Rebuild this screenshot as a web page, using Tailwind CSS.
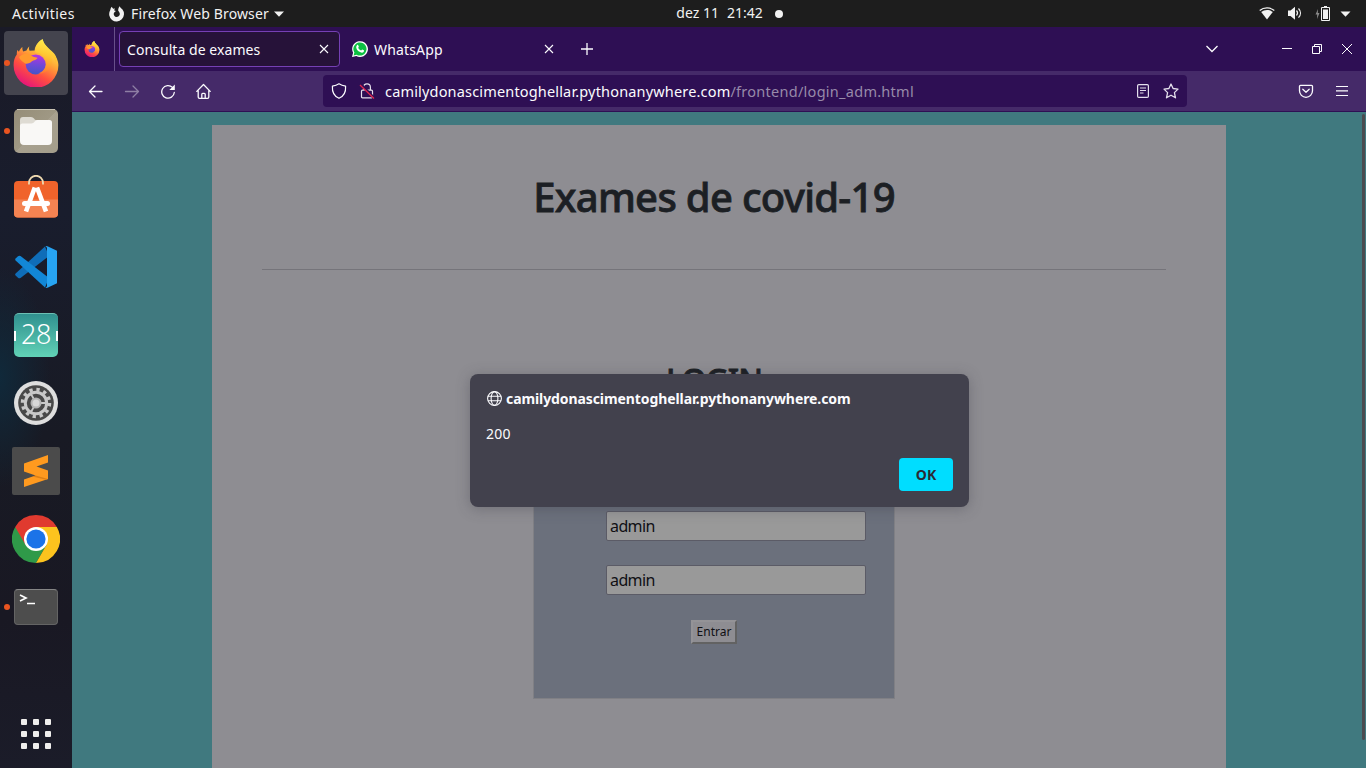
<!DOCTYPE html>
<html lang="pt-BR">
<head>
<meta charset="utf-8">
<title>Consulta de exames</title>
<script src="https://cdn.jsdelivr.net/npm/@tailwindcss/browser@4"></script>
</head>
<body class="w-[1366px] h-[768px] overflow-hidden flex flex-col bg-[#1a1a24] text-white font-['Noto_Sans',sans-serif]">

<!-- Desktop top bar -->
<header class="h-[27px] shrink-0 bg-[#1d1d1d] text-[#f2f2f2] text-[14px] leading-[27px] grid grid-cols-3 whitespace-nowrap">
  <div class="flex items-center pl-3">
    <span class="w-[62px] tracking-[0.45px]">Activities</span>
    <svg class="ml-[35px] w-4 h-4" viewBox="0 0 16 16"><path fill="#f2f2f2" d="M2.600.7 4.200 2.700l1.900-.2L5 4.300 6.900 5 5.200 6.400a3 3 0 1 0 5.200.1c-.2-.8-.7-1.300-1.100-1.500C9 3.300 9.600 1.500 10.800.2c.3 1.500 1.600 2 2.700 3.400a7.400 7.400 0 1 1-12.300.7c.1-1.200.6-2.500 1.400-3.600z"/></svg>
    <span class="ml-[6px] w-[138px] tracking-[0.13px]">Firefox Web Browser</span>
    <svg class="ml-[5px] w-[10px] h-[6px]" viewBox="0 0 10 6"><path fill="#f2f2f2" d="M0 .5h10L5 5.700z"/></svg>
  </div>
  <div class="flex items-center pl-[221px]">
    <span class="relative -top-px">dez 11</span><span class="relative -top-px ml-2">21:42</span>
    <span class="ml-3 w-2 h-2 rounded-full bg-[#f2f2f2]"></span>
  </div>
  <div class="flex items-center justify-end pr-[15px]">
    <svg class="w-4 h-4" viewBox="0 0 16 16"><path fill="none" stroke="#f2f2f2" stroke-width="1.300" d="M.7 4.500C4.800 1.100 11.200 1.100 15.300 4.500"/><path fill="#f2f2f2" d="M2.200 6c3.300-2.700 8.300-2.700 11.600 0L8 13.500z"/></svg>
    <svg class="ml-3 w-4 h-4" viewBox="0 0 16 16"><path fill="#f2f2f2" d="M1 4.500h2.500L8 .7v13L3.500 10H1z"/><path fill="none" stroke="#f2f2f2" stroke-width="1.200" d="M9.500 4.500c1.300 1.500 1.300 3.500 0 5M11.500 2.500c2.600 2.700 2.600 6.500 0 9.200"/></svg>
    <svg class="ml-3 w-4 h-4" viewBox="0 0 16 16"><path fill="#8a8a8a" d="M3 3 .5 8.500h1.700L2 13 4.500 7H2.800z"/><path fill="none" stroke="#f2f2f2" d="M6.500 1.500h8v13h-8z"/><path fill="#f2f2f2" d="M9 0h3v1.500H9zM8 3.500h5V13H8z"/></svg>
    <svg class="ml-[9px] w-[11px] h-[6px]" viewBox="0 0 11 6"><path fill="#f2f2f2" d="M.5.5h10l-5 5.200z"/></svg>
  </div>
</header>

<div class="flex flex-1 min-h-0">
  <!-- Dock -->
  <nav class="w-[72px] shrink-0 flex flex-col items-center pt-[2px] bg-[radial-gradient(ellipse_50px_110px_at_0px_350px,#10293a,transparent),linear-gradient(#1a1a27,#191d2d_25%,#181a24_55%,#191823_80%,#1b1c29)]">
    <div class="relative w-16 h-[68px] pt-[2px]">
      <div class="w-16 h-16 rounded-[4px] bg-[#44444e] flex items-center justify-center">
        <svg class="w-12 h-12" viewBox="0 0 48 48">
          <defs>
            <linearGradient id="ffa" x1=".8" y1=".1" x2=".3" y2="1"><stop offset="0" stop-color="#fff44f"/><stop offset=".35" stop-color="#ffa436"/><stop offset=".65" stop-color="#ff4f40"/><stop offset="1" stop-color="#e4127d"/></linearGradient>
            <linearGradient id="ffb" x1=".5" y1="0" x2=".4" y2="1"><stop offset="0" stop-color="#b833e1"/><stop offset=".5" stop-color="#7048d8"/><stop offset="1" stop-color="#4255c6"/></linearGradient>
            <linearGradient id="ffc" x1=".7" y1="0" x2=".5" y2="1"><stop offset="0" stop-color="#fff24f"/><stop offset=".5" stop-color="#ffc532"/><stop offset="1" stop-color="#ff7a30"/></linearGradient>
          </defs>
          <g id="fox">
            <path fill="url(#ffa)" d="M10.500 8c-.5 2 .2 3.500.7 4.400l3.300-.9c1-2 2-3.400 2.800-4-.6 2-.2 3.300.3 4.300l5-.4C23 6.500 27 1.500 30.800.3c.4 5 5 8 7.600 11.500 4.500 4.500 8 8 8 14.500a22.400 22.400 0 0 1-44.800 0c0-4.500 1-8 3.200-10.800 0-2 .2-3.500.6-4.500l1.500 1.800C7.800 10.500 9 9 10.500 8z"/>
            <circle cx="23.700" cy="25.500" r="10" fill="url(#ffb)"/>
            <path fill="#ff9a2e" d="M7 18c4-3.500 7.500-3.700 11-2.600 2 1.800 4.200 2.800 7.500 3.300-.5 2-4 2.500-5.600 3.600-1 1.500-3.500 2.500-5.700 2.500C12 24 8 21 7 18z"/>
            <path fill="url(#ffc)" d="M30.800.3C25 4 22.500 9 23.500 13.200c6 .8 9.500 4.500 10.500 9.300.8 6-2.500 10-8 12 10 .5 16.500-8 13-18 4 3 5 8 5 8 2.300-7-2.500-11-5.600-13.500C35 7.500 31.500 5 30.800.3z"/>
          </g>
        </svg>
      </div>
      <span class="absolute left-0 top-[31px] w-[6px] h-[6px] rounded-full bg-[#e95420]"></span>
    </div>
    <div class="relative w-16 h-[68px] flex items-center justify-center">
      <svg class="w-12 h-12" viewBox="0 0 48 48"><defs><linearGradient id="fl" x1="0" y1="0" x2="1" y2="1"><stop offset="0" stop-color="#958d78"/><stop offset=".5" stop-color="#9f9884"/><stop offset=".5" stop-color="#a8a18f"/><stop offset="1" stop-color="#a39d8b"/></linearGradient></defs><rect x="2" y="2" width="44" height="44" rx="5" fill="url(#fl)"/><path d="M5 2.500h38" stroke="#c9c3b3"/><path fill="#dedbd3" d="M8 13q0-3 3-3h8q2 0 3 1.500t2 1.500h12v8H8z"/><path fill="#f9f8f6" d="M8 19q0-2.500 2.500-2.500h9q2 0 3-1.700t3-1.700h12q2.500 0 2.500 2.500V34q0 4-4 4H12q-4 0-4-4z"/></svg>
      <span class="absolute left-0 top-[31px] w-[6px] h-[6px] rounded-full bg-[#e95420]"></span>
    </div>
    <div class="w-16 h-[68px] flex items-center justify-center">
      <svg class="w-12 h-12" viewBox="0 0 48 48"><rect x="2" y="6" width="44" height="36.500" rx="4" fill="#f0632b"/><path fill="#f48352" d="M2 24.500h44v14q0 4-4 4H6q-4 0-4-4z"/><path d="M17 9.500V7.800a7 7 0 0 1 14 0v1.700" fill="none" stroke="#efd9b0" stroke-width="1.800"/><path d="M22.800 12.500 14 36.500M25 12.500 34 36.500" fill="none" stroke="#fff" stroke-width="4.600"/><rect x="10" y="26" width="28" height="5" rx="2.500" fill="#fff"/></svg>
    </div>
    <div class="w-16 h-[68px] flex items-center justify-center">
      <svg class="w-12 h-12" viewBox="0 0 48 48"><path fill="#0f6db8" d="M33 3.500 3.600 30.500q-1 1 0 2L6 34.800q1.200 1 2.500.1L37 13z"/><path fill="#1287d6" d="M33 44.500 3.600 17.500q-1-1 0-2L6 13.200q1.200-1 2.500-.1L37 35z"/><path fill="#27a4f2" d="M33 44.500q1.500.8 3 .1l9-4.400V7.800L36 3.400q-1.500-.7-3 .1 2-.5 2 2v37q0 2.500-2 2z"/></svg>
    </div>
    <div class="w-16 h-[68px] flex items-center justify-center">
      <div class="w-11 h-11 rounded-[5px] bg-linear-to-b from-[#30918f] to-[#61d2b6] border-t border-[#6cc0b4] flex items-center justify-between">
        <span class="w-[2px] h-[10px] bg-white"></span>
        <span class="text-[27px] leading-[42px] tracking-[-0.5px] pb-[3px] font-light">28</span>
        <span class="w-[2px] h-[10px] bg-white"></span>
      </div>
    </div>
    <div class="w-16 h-[68px] flex items-center justify-center">
      <svg class="w-12 h-12" viewBox="0 0 48 48"><circle cx="24" cy="24" r="22" fill="#dedede"/><circle cx="24" cy="24" r="17.800" fill="#484848"/><circle cx="24" cy="24" r="13.500" fill="none" stroke="#c8c8c8" stroke-width="3.500" stroke-dasharray="3.300 3.768"/><circle cx="24" cy="24" r="10.700" fill="none" stroke="#c8c8c8" stroke-width="3"/><path d="M24 24h10M24 24l-5 9M24 24l-5-9" stroke="#c8c8c8" stroke-width="1.800"/><circle cx="24" cy="24" r="5.500" fill="#b5b5b5"/><circle cx="24" cy="24" r="3.500" fill="#d8d8d8"/></svg>
    </div>
    <div class="w-16 h-[68px] flex items-center justify-center">
      <svg class="w-12 h-12" viewBox="0 0 48 48"><rect width="48" height="48" rx="2" fill="#4b4b4b"/><path fill="#ff9a1f" d="M12 16.500 36 8v7.500l-11.500 4L36 23.500v8.500L12 40v-7.500l11.500-4L12 24.500z"/><path fill="#dd7f16" d="m23.500 28.500 12.500 3.500-2 .7-13.500-3.200z"/></svg>
    </div>
    <div class="w-16 h-[68px] flex items-center justify-center">
      <svg class="w-12 h-12" viewBox="0 0 48 48"><path fill="#2f9a49" d="M24 24 3.200 12A24 24 0 0 0 24 48L34.400 30z"/><path fill="#fcc31e" d="M24 12h20.800A24 24 0 0 1 24 48l10.400-18z"/><path fill="#e03a2f" d="M24 0a24 24 0 0 1 20.800 12H24L13.600 30 3.200 12A24 24 0 0 1 24 0z"/><circle cx="24" cy="24" r="12" fill="#fff"/><circle cx="24" cy="24" r="9.600" fill="#1b73e8"/></svg>
    </div>
    <div class="relative w-16 h-[68px] flex items-center justify-center">
      <div class="w-11 h-9 rounded-[4px] bg-[#4d4d4d] border border-[#646464] border-t-[#858585]"><svg class="w-10 h-8" viewBox="0 0 40 32"><path fill="none" stroke="#fff" stroke-width="1.700" d="m5 5 6 3-6 3M12 13.500h8"/></svg></div>
      <span class="absolute left-0 top-[31px] w-[6px] h-[6px] rounded-full bg-[#e95420]"></span>
    </div>
    <div class="mt-auto mb-[19px] grid grid-cols-3 gap-[6px]">
      <i class="w-[6px] h-[6px] rounded-[1px] bg-[#f0efed]"></i><i class="w-[6px] h-[6px] rounded-[1px] bg-[#f0efed]"></i><i class="w-[6px] h-[6px] rounded-[1px] bg-[#f0efed]"></i>
      <i class="w-[6px] h-[6px] rounded-[1px] bg-[#f0efed]"></i><i class="w-[6px] h-[6px] rounded-[1px] bg-[#f0efed]"></i><i class="w-[6px] h-[6px] rounded-[1px] bg-[#f0efed]"></i>
      <i class="w-[6px] h-[6px] rounded-[1px] bg-[#f0efed]"></i><i class="w-[6px] h-[6px] rounded-[1px] bg-[#f0efed]"></i><i class="w-[6px] h-[6px] rounded-[1px] bg-[#f0efed]"></i>
    </div>
  </nav>

  <!-- Browser window -->
  <div class="flex-1 min-w-0 flex flex-col">
    <div class="h-[44px] shrink-0 bg-[#2e0f54] flex items-center text-[14px] text-[#fbfbfe] whitespace-nowrap">
      <div class="w-[43px] h-full border-r border-[#68508a] flex items-center pl-3"><svg class="w-4 h-4" viewBox="0 0 48 48"><use href="#fox"/></svg></div>
      <div class="ml-1 w-[221px] h-9 rounded-[4px] bg-[#261239] border border-[#7540b4] flex items-center pl-[7px] pr-[10px] justify-between">
        <span class="tracking-[0.06px]">Consulta de exames</span>
        <svg class="w-[10px] h-[10px]" viewBox="0 0 10 10"><path stroke="#fbfbfe" stroke-width="1.100" d="m1 1 8 8M9 1 1 9"/></svg>
      </div>
      <svg class="ml-3 w-4 h-4" viewBox="0 0 16 16"><path fill="#fff" d="M0 16l1.100-4.200A7.900 7.900 0 1 1 4.300 15z"/><path fill="#0cc042" d="m1.600 14.400.8-2.800a6.600 6.600 0 1 1 2.200 2.100z"/><path fill="#fff" d="M5 4.200c.5-.5 1-.5 1.200 0l.6 1.400c.1.400-.5.900-.6 1.200.6 1.300 1.600 2.200 2.900 2.800.4-.2.800-1.100 1.200-1l1.500.7c.5.300.2 1.300-.3 1.800-1 .9-2.600.7-4.500-.5C4.700 9.100 3.300 6 5 4.200z"/></svg>
      <span class="ml-[6px] w-[170px] tracking-[0.15px]">WhatsApp</span>
      <svg class="w-[10px] h-[10px]" viewBox="0 0 10 10"><path stroke="#fbfbfe" stroke-width="1.100" d="m1 1 8 8M9 1 1 9"/></svg>
      <svg class="ml-[27px] w-3 h-3" viewBox="0 0 12 12"><path stroke="#fbfbfe" stroke-width="1.300" d="M6 0v12M0 6h12"/></svg>
      <svg class="ml-auto w-[14px] h-[14px]" viewBox="0 0 14 14"><path fill="none" stroke="#fbfbfe" stroke-width="1.300" d="m1.500 4 5.500 5.500L12.500 4"/></svg>
      <svg class="ml-[63px] w-[10px] h-[10px]" viewBox="0 0 10 10"><path stroke="#fbfbfe" d="M0 4.500h10"/></svg>
      <svg class="ml-5 w-[10px] h-[10px]" viewBox="0 0 10 10"><path fill="none" stroke="#fbfbfe" d="M.5 2.500h7v7h-7zM2.500 2.500v-2h7v7h-2"/></svg>
      <svg class="ml-5 mr-[14px] w-[10px] h-[10px]" viewBox="0 0 10 10"><path stroke="#fbfbfe" stroke-width="1" d="m0 0 10 10M10 0 0 10"/></svg>
    </div>

    <div class="h-[41px] shrink-0 bg-[#452a69] border-b border-[#2e0f54] flex items-center pl-4 pr-4">
      <svg class="w-4 h-4" viewBox="0 0 16 16"><path fill="none" stroke="#fbfbfe" stroke-width="1.300" stroke-linecap="round" stroke-linejoin="round" d="M14 8.500H1.500M7 3 1.500 8.500 7 14"/></svg>
      <svg class="ml-5 w-4 h-4" viewBox="0 0 16 16"><path fill="none" stroke="#8f7fa5" stroke-width="1.300" stroke-linecap="round" stroke-linejoin="round" d="M1.500 8.500h13M9 3l5.500 5.500L9 14"/></svg>
      <svg class="ml-5 w-4 h-4" viewBox="0 0 16 16"><path fill="none" stroke="#fbfbfe" stroke-width="1.300" stroke-linecap="round" d="M12.500 4.400A6.300 6.300 0 1 0 14.300 9.500"/><path fill="#fbfbfe" d="M14.800 1.500V7H9.300z"/></svg>
      <svg class="ml-5 w-4 h-4" viewBox="0 0 16 16"><path fill="none" stroke="#fbfbfe" stroke-width="1.300" stroke-linejoin="round" stroke-linecap="round" d="M.8 8.400 7.500 1.500l6.700 6.900M2.200 7.500v6.500q0 1.300 1.300 1.300h8q1.300 0 1.300-1.300V7.500M5.800 15.300v-4.100q0-.9.9-.9h1.600q.9 0 .9.9v4.100"/></svg>
      <div class="ml-[111px] w-[864px] h-8 rounded-[4px] bg-[#2e0f54] flex items-center px-2 text-[14.500px] whitespace-nowrap">
        <svg class="w-4 h-4" viewBox="0 0 16 16"><path fill="none" stroke="#fbfbfe" stroke-width="1.200" stroke-linejoin="round" d="M8 .8c2 1.300 4 2 6.600 2.400C15 9 12.500 13.300 8 15.300 3.500 13.300 1 9 1.400 3.200 4 2.800 6 2.100 8 .8z"/></svg>
        <svg class="ml-3 w-4 h-4" viewBox="0 0 16 16"><path fill="none" stroke="#e4dfec" stroke-width="1.200" d="M4.600 7V4.200a3.400 3.400 0 0 1 6.800 0V7M3.500 7.200h9q1 0 1 1v5.600q0 1-1 1h-9q-1 0-1-1V8.200q0-1 1-1z"/><path stroke="#2e0f54" stroke-width="2.600" d="m2 1.500 13 13.500"/><path stroke="#e22850" stroke-width="1.300" d="m1 2 14 13.500"/></svg>
        <span class="relative top-px ml-[10px] text-[#fbfbfe] tracking-[0.17px]">camilydonascimentoghellar.pythonanywhere.com</span><span class="relative top-px text-[#978aa9] tracking-[0.27px]">/frontend/login_adm.html</span>
        <svg class="ml-auto w-4 h-4" viewBox="0 0 16 16"><path fill="none" stroke="#e4dfec" stroke-width="1.200" d="M3.800 1.600h8.400q1.200 0 1.200 1.200v10.400q0 1.200-1.200 1.200H3.800q-1.200 0-1.200-1.200V2.800q0-1.200 1.200-1.200zM5 5h6M5 7.500h6M5 10h3.500"/></svg>
        <svg class="ml-3 w-4 h-4" viewBox="0 0 16 16"><path fill="none" stroke="#e4dfec" stroke-width="1.300" stroke-linejoin="round" d="m8 1 2.100 4.500 4.900.6-3.600 3.500 1.100 5.200L8 12.200l-4.500 2.600 1.100-5.200L1 6.100l4.900-.6z"/></svg>
      </div>
      <svg class="ml-auto w-4 h-4" viewBox="0 0 16 16"><path fill="none" stroke="#fbfbfe" stroke-width="1.300" stroke-linejoin="round" stroke-linecap="round" d="M2.500 2.300h11q1 0 1 1v4.500a6.500 6.500 0 0 1-13 0V3.300q0-1 1-1zM4.800 6.300 8 9.300l3.200-3"/></svg>
      <svg class="ml-5 w-4 h-4" viewBox="0 0 16 16"><path stroke="#fbfbfe" stroke-width="1.200" d="M2 3.500h12M2 7.900h12M2 12.500h12"/></svg>
    </div>

    <!-- Page under the modal -->
    <main class="relative flex-1 min-h-0 bg-[#40797f] overflow-hidden pt-[13px] pl-[140px] text-[#1c1f24]">
      <div class="w-[1014px] h-[660px] bg-[#8e8d92] pl-[50px] pr-[60px] flex flex-col items-center">
        <h1 class="mt-[48px] h-[48px] text-[40px] leading-[48px] font-medium tracking-[-0.7px] whitespace-nowrap [-webkit-text-stroke:0.8px_#1c1f24]">Exames de covid-19</h1>
        <hr class="mt-[48px] w-full border-t border-[#75747a]">
        <h2 class="mt-[91px] h-[38px] text-[32px] leading-[38px] font-medium tracking-[-1px] [-webkit-text-stroke:0.8px_#1c1f24]">LOGIN</h2>
        <form class="mt-[45px] w-[362px] h-[255px] border border-[#808085] bg-[#6b707c] pl-[72px] flex flex-col">
          <input class="mt-[66px] w-[260px] h-[30px] rounded-[2px] border border-[#5b5b66] bg-[#999999] px-[3px] text-[16px] tracking-[-0.6px] text-[#101014]" value="admin">
          <input class="mt-6 w-[260px] h-[30px] rounded-[2px] border border-[#5b5b66] bg-[#999999] px-[3px] text-[16px] tracking-[-0.6px] text-[#101014]" value="admin">
          <button type="button" class="mt-[25px] ml-[85px] w-[46px] h-6 bg-[#8e8d92] border-2 border-t-[#949397] border-l-[#949397] border-r-[#626262] border-b-[#626262] text-[12px] leading-5 text-[#101014] flex justify-center">Entrar</button>
        </form>
      </div>
      <div class="absolute right-[1px] top-[2px] w-[3px] h-[626px] rounded-full bg-[#4b4b50]"></div>

      <div class="absolute left-[398px] top-[262px] w-[499px] h-[133px] rounded-[8px] bg-[#42414d] shadow-[0_2px_14px_rgba(58,57,68,0.35)] text-[#fbfbfe] text-[14px] px-4 pt-[14px] flex flex-col">
        <div class="flex items-center h-5 font-bold whitespace-nowrap">
          <svg class="w-4 h-4 ml-[1px] mr-[3px]" viewBox="0 0 16 16"><g fill="none" stroke="#fbfbfe" stroke-width="1.100"><circle cx="7.500" cy="8.500" r="6.900"/><ellipse cx="7.500" cy="8.500" rx="3.400" ry="6.900"/><path d="M1 6.200h13M1 10.800h13"/></g></svg>
          <span class="tracking-[-0.09px]">camilydonascimentoghellar.pythonanywhere.com</span>
        </div>
        <p class="mt-4 leading-5 tracking-[0.2px]">200</p>
        <button type="button" class="self-end mt-[14px] w-[54px] h-[33px] rounded-[4px] bg-[#00ddff] text-[#2b2a33] font-bold">OK</button>
      </div>
    </main>
  </div>
</div>
</body>
</html>
